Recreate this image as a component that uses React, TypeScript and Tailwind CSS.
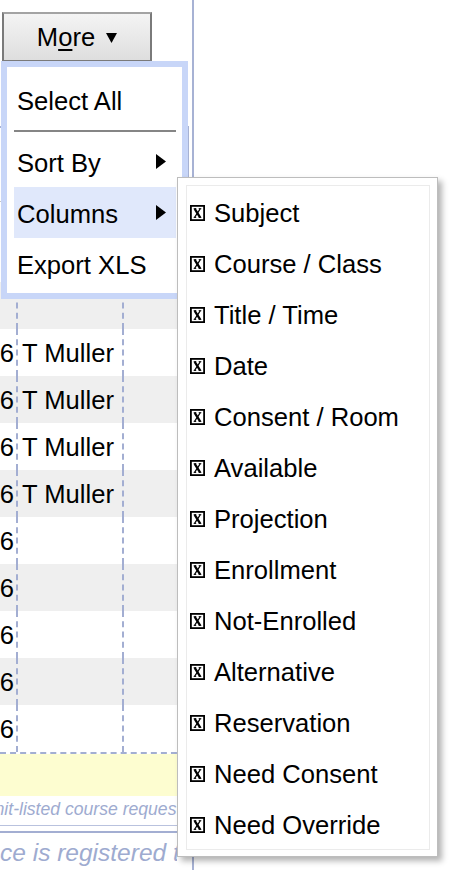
import React from "react";

const rows: { text: string; gray: boolean }[] = [
  { text: "", gray: true },
  { text: "T Muller", gray: false },
  { text: "T Muller", gray: true },
  { text: "T Muller", gray: false },
  { text: "T Muller", gray: true },
  { text: "", gray: false },
  { text: "", gray: true },
  { text: "", gray: false },
  { text: "", gray: true },
  { text: "", gray: false },
];

const columns = [
  "Subject",
  "Course / Class",
  "Title / Time",
  "Date",
  "Consent / Room",
  "Available",
  "Projection",
  "Enrollment",
  "Not-Enrolled",
  "Alternative",
  "Reservation",
  "Need Consent",
  "Need Override",
];

function RightTri() {
  return (
    <svg width="10" height="15" viewBox="0 0 10 15" className="shrink-0">
      <polygon points="0,0 10,7.5 0,15" fill="#000" />
    </svg>
  );
}

function DownTri() {
  return (
    <svg width="11" height="10" viewBox="0 0 11 10" className="shrink-0">
      <polygon points="0,0 11,0 5.5,10" fill="#000" />
    </svg>
  );
}

function CheckBox() {
  return (
    <svg width="15" height="16" viewBox="0 0 15 16" className="shrink-0">
      <rect x="0.9" y="0.9" width="13.2" height="14.2" fill="none" stroke="#000" strokeWidth="1.8" />
      <path d="M4.7 3.8 L10.1 12.3" stroke="#000" strokeWidth="2.3" />
      <path d="M10.2 3.8 L4.6 12.3" stroke="#000" strokeWidth="1.2" />
      <path d="M3.7 3.7 H6.3 M8.7 3.7 H11.3 M3.7 12.4 H6.2 M8.7 12.4 H11.3" stroke="#000" strokeWidth="1" />
    </svg>
  );
}

export default function App() {
  return (
    <div className="relative w-[454px] h-[870px] overflow-hidden bg-white text-black font-['Liberation_Sans',Arial,sans-serif]">
      {/* background panel */}
      <div className="w-[194px] h-full border-r-2 border-[#a7b2d4] flex flex-col">
        <div className="h-[126px] pt-[12px] pl-[2px] shrink-0">
          <button className="w-[150px] h-[50px] flex items-center justify-center gap-[11px] pt-[2px] border-2 border-[#7a7a7a] border-t-[#a3a3a3] bg-gradient-to-b from-[#f4f4f4] to-[#dedede] text-[25.6px] leading-none">
            <span>
              M<span className="underline underline-offset-[3px] decoration-[1.5px]">o</span>re
            </span>
            <DownTri />
          </button>
        </div>

        <div className="w-[189px] border-t-2 border-r-2 border-[#a7b2d4] shrink-0 text-[25.6px]">
          <div className="h-[74px] border-b border-[#c4c4c4]" />
          <div className="h-[39px] flex">
            <div className="w-[18px] flex justify-end items-center pr-[2px]">6</div>
          </div>
          <div className="h-[41px] flex">
            <div className="w-[18px] flex justify-end items-center pr-[2px]">6</div>
          </div>
          {rows.map((r, i) => (
            <div key={i} className={`h-[47px] flex ${r.gray ? "bg-[#efefef]" : "bg-white"}`}>
              <div className="w-[18px] shrink-0 border-r-2 border-dashed border-[#a3aed2] flex justify-end items-center pr-[2px] pt-[2px]">
                {i === 0 ? "" : "6"}
              </div>
              <div className="w-[106px] shrink-0 border-r-2 border-dashed border-[#a3aed2] flex items-center pl-[4px] pt-[2px] whitespace-nowrap">
                {r.text}
              </div>
              <div className="flex-1" />
            </div>
          ))}
          <div className="h-[2px] border-t-2 border-dashed border-[#a3aed2]" />
        </div>

        <div className="h-[42px] bg-[#fdfdd0] shrink-0" />
        <div className="w-[177px] overflow-hidden shrink-0">
          <div className="h-[20px] mt-[3px] flex items-center whitespace-nowrap italic text-[17.6px] text-[#9eabd0] ml-[-24px]">
            Limit-listed course requests
          </div>
          <div className="h-[1px] bg-[#b9c2de] mt-[6px]" />
          <div className="h-[2px] bg-[#a3aed2] mt-[5px]" />
          <div className="pt-[7px] leading-[26px] whitespace-nowrap italic text-[24.5px] text-[#9eabd0]">
            ce is registered to
          </div>
        </div>
      </div>

      {/* dropdown menu */}
      <div className="absolute left-[1px] top-[61px] w-[187px] h-[238px] border-[6px] border-[#c8d6f8] bg-white pt-[7px] pl-[7px] pr-[6px] text-[25.6px] leading-none">
        <div className="h-[51px] flex items-center pl-[3px] pt-[4px]">Select All</div>
        <div className="h-[11px] flex items-center">
          <div className="h-[2px] w-full bg-[#858585]" />
        </div>
        <div className="h-[51px] flex items-center justify-between pl-[3px] pr-[10px]">
          <span className="pt-[4px]">Sort By</span>
          <RightTri />
        </div>
        <div className="h-[51px] flex items-center justify-between pl-[3px] pr-[10px] bg-[#e0e8fb]">
          <span className="pt-[4px]">Columns</span>
          <RightTri />
        </div>
        <div className="h-[51px] flex items-center pl-[3px] pt-[4px]">Export XLS</div>
      </div>

      {/* columns submenu */}
      <div className="absolute left-[177px] top-[177px] w-[261px] border border-[#bdbdbd] bg-white pt-[7px] pl-[8px] pr-[7px] pb-[6px] shadow-[4px_4px_6px_rgba(0,0,0,0.3)] text-[25.6px] leading-none">
        <div className="border border-[#ebebeb]">
          {columns.map((c) => (
            <div key={c} className="h-[51px] flex items-center pl-[3px] gap-[9px] whitespace-nowrap">
              <span className="pt-[2px]">
                <CheckBox />
              </span>
              <span className="pt-[4px]">{c}</span>
            </div>
          ))}
        </div>
      </div>
    </div>
  );
}
